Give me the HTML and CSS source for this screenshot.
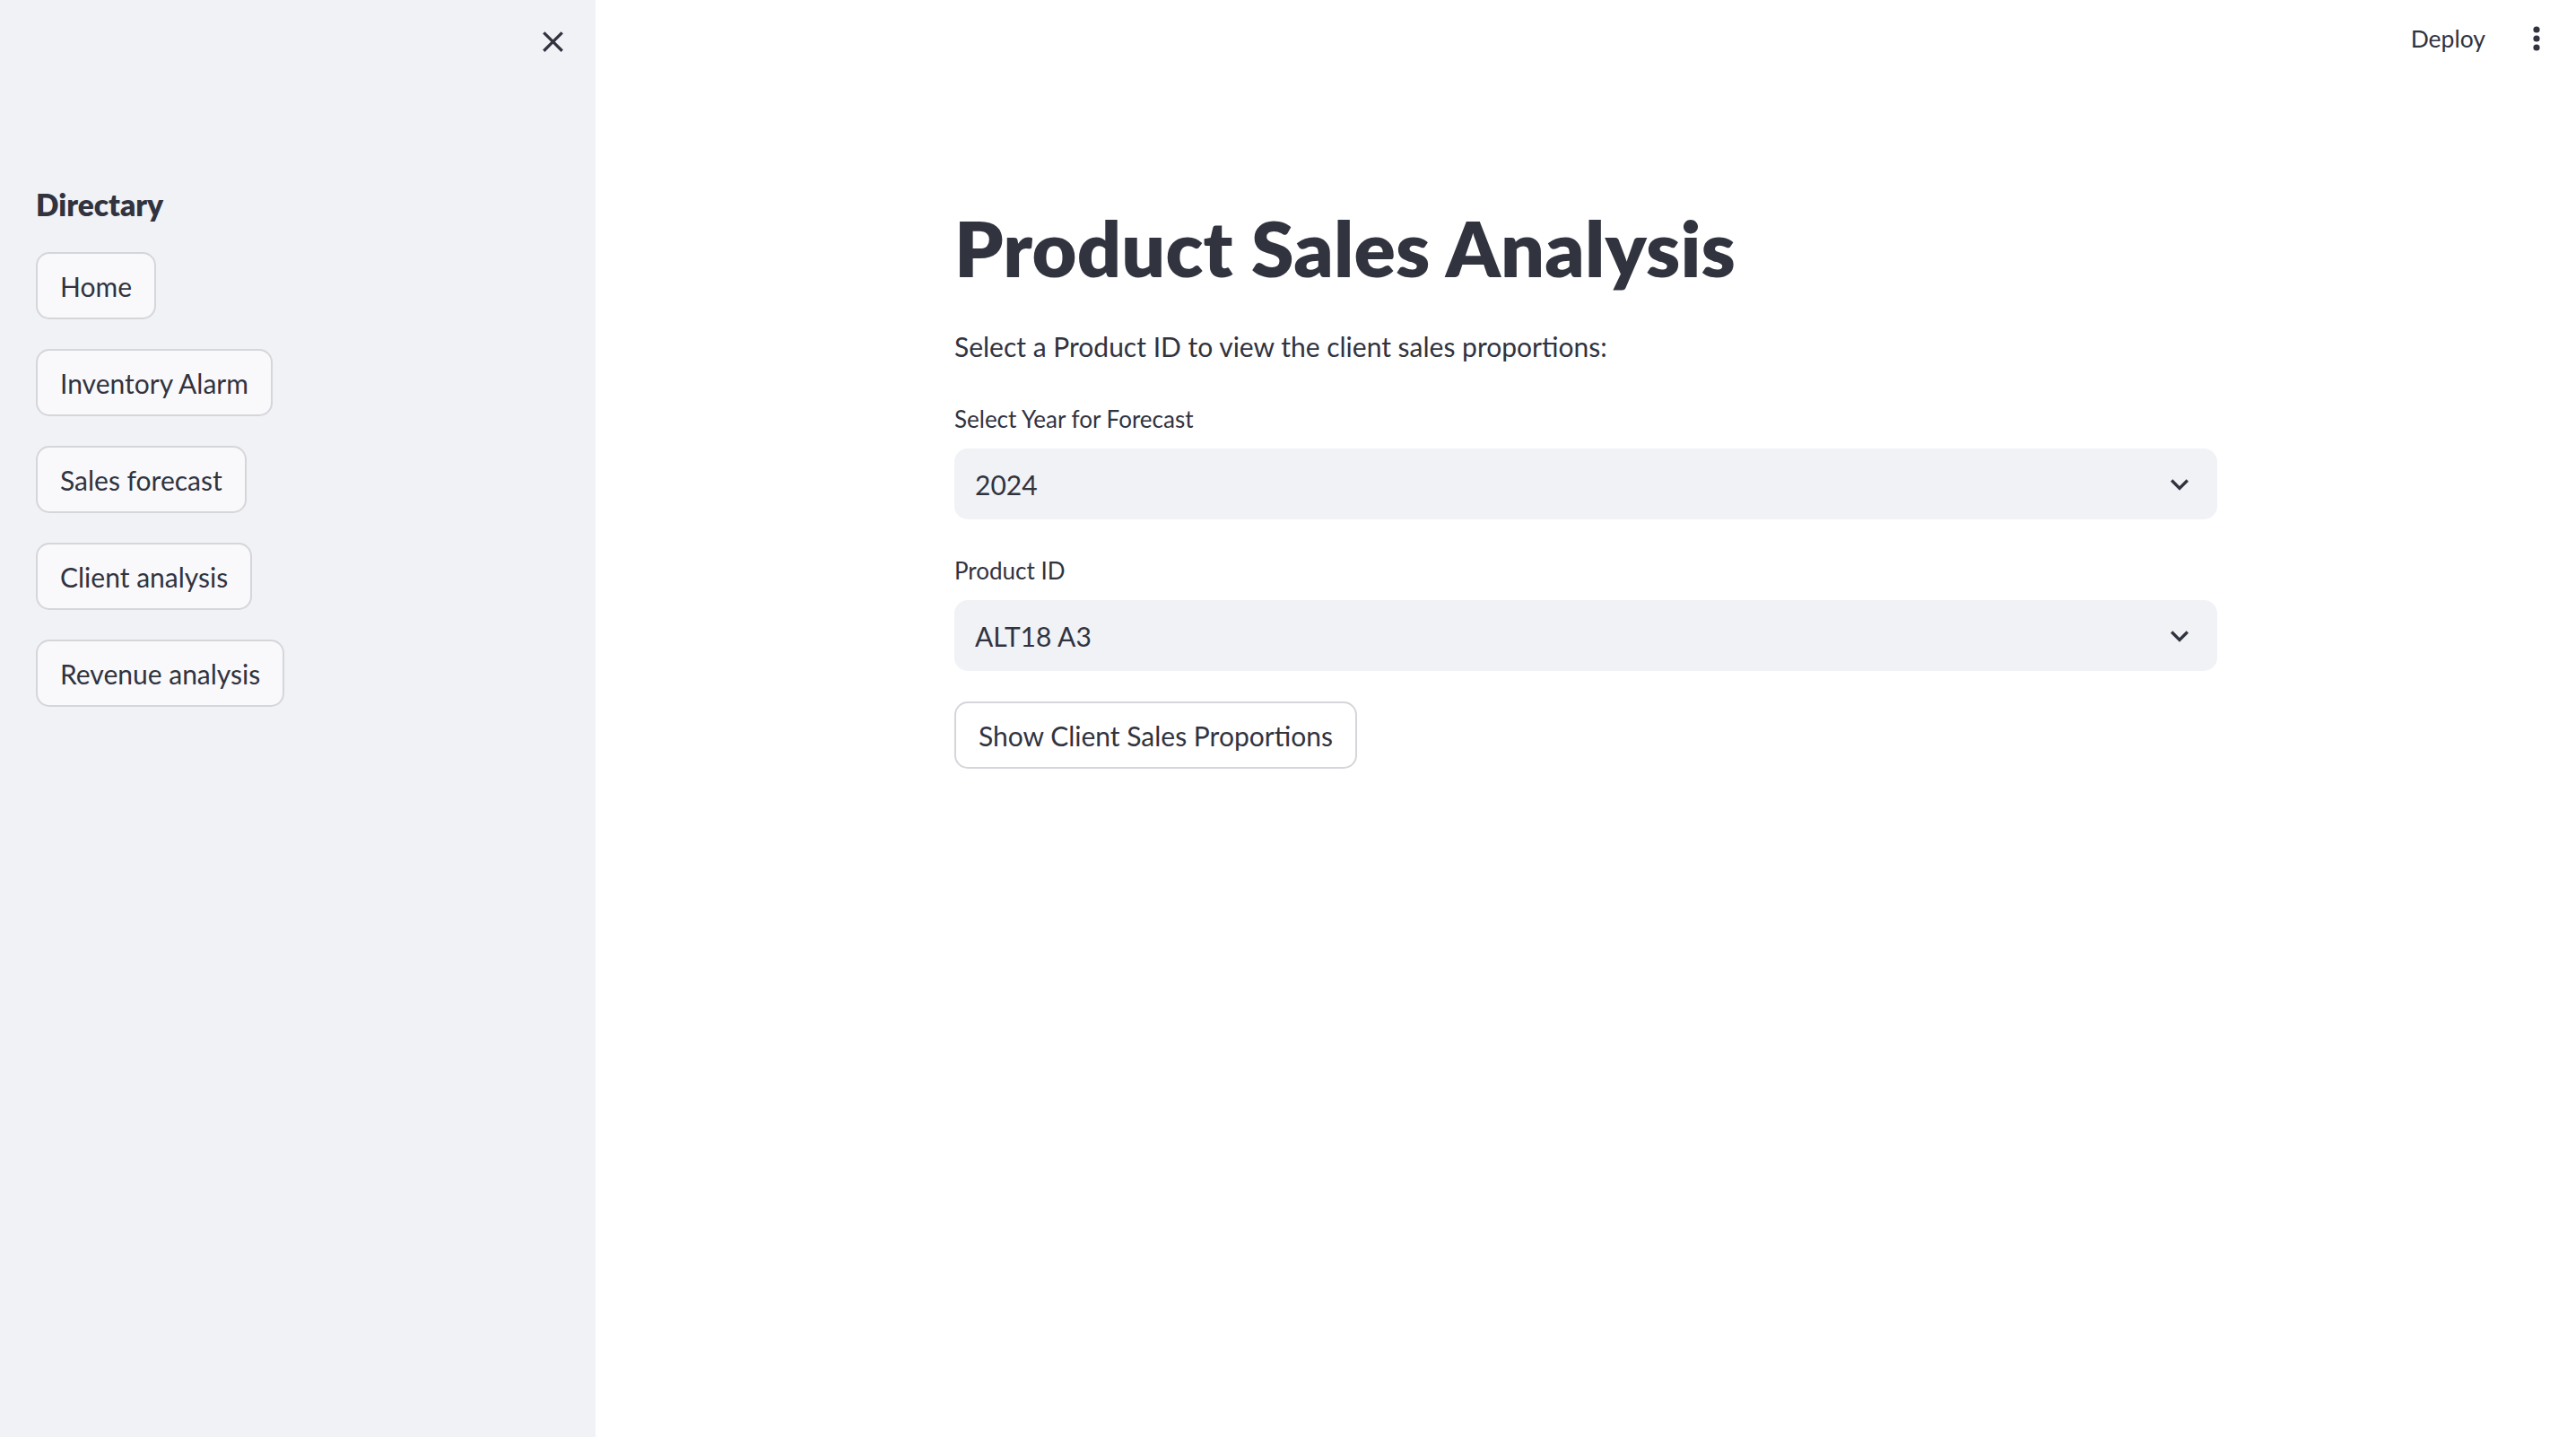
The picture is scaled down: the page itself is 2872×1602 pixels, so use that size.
FILE: index.html
```html
<!DOCTYPE html>
<html lang="en">
<head>
<meta charset="utf-8">
<title>Product Sales Analysis</title>
<link rel="stylesheet" href="styles.css">
</head>
<body>
<div class="app">
  <aside class="sidebar">
    <div class="sidebar-header">
      <svg class="close-icon" viewBox="0 0 24 24" width="39" height="39" aria-hidden="true"><path d="M19 6.41L17.59 5 12 10.59 6.41 5 5 6.41 10.59 12 5 17.59 6.41 19 12 13.41 17.59 19 19 17.59 13.41 12z"/></svg>
    </div>
    <div class="sidebar-content">
      <h3 class="side-title">Directary</h3>
      <nav class="side-nav">
        <button class="btn side-btn">Home</button>
        <button class="btn side-btn">Inventory Alarm</button>
        <button class="btn side-btn">Sales forecast</button>
        <button class="btn side-btn">Client analysis</button>
        <button class="btn side-btn">Revenue analysis</button>
      </nav>
    </div>
  </aside>
  <main class="main">
    <header class="toolbar">
      <span class="deploy">Deploy</span>
      <svg class="kebab" viewBox="0 0 10 30" width="10" height="30" aria-hidden="true"><circle cx="5" cy="5" r="3.6"/><circle cx="5" cy="15" r="3.6"/><circle cx="5" cy="25" r="3.6"/></svg>
    </header>
    <section class="content">
      <h1 class="title">Product Sales Analysis</h1>
      <p class="intro">Select a Product ID to view the client sales proportions:</p>
      <label class="field-label">Select Year for Forecast</label>
      <div class="select">
        <span>2024</span>
        <svg class="chevron" viewBox="0 0 24 24" width="40" height="40" aria-hidden="true"><path d="M16.59 8.59L12 13.17 7.41 8.59 6 10l6 6 6-6z"/></svg>
      </div>
      <label class="field-label second">Product ID</label>
      <div class="select">
        <span>ALT18 A3</span>
        <svg class="chevron" viewBox="0 0 24 24" width="40" height="40" aria-hidden="true"><path d="M16.59 8.59L12 13.17 7.41 8.59 6 10l6 6 6-6z"/></svg>
      </div>
      <div class="actions">
        <button class="btn main-btn">Show Client Sales Proportions</button>
      </div>
    </section>
  </main>
</div>
</body>
</html>
```

FILE: styles.css
```css
* { box-sizing: border-box; }
html, body { margin: 0; padding: 0; height: 100%; }
body {
  font-family: "Lato", "Noto Sans", sans-serif;
  color: #31333f;
  background: #ffffff;
  overflow: hidden;
}
.app {
  display: flex;
  height: 100vh;
}
.sidebar {
  width: 664px;
  flex: 0 0 664px;
  background: #f0f2f6;
  display: flex;
  flex-direction: column;
}
.sidebar-header {
  height: 92px;
  display: flex;
  justify-content: flex-end;
  align-items: center;
  padding-right: 28px;
}
.close-icon { fill: #31333f; }
.sidebar-content {
  padding: 116px 40px 0 40px;
  display: flex;
  flex-direction: column;
}
.side-title {
  margin: 0;
  font-size: 33.5px;
  line-height: 40px;
  font-weight: 800;
}
.side-nav {
  margin-top: 33px;
  display: flex;
  flex-direction: column;
  align-items: flex-start;
  gap: 33px;
}
.btn {
  font-family: inherit;
  color: #31333f;
  display: inline-flex;
  align-items: center;
  height: 75px;
  padding: 0 25px;
  border: 2px solid #d5d6da;
  border-radius: 15px;
  font-size: 30px;
  cursor: pointer;
}
.side-btn { background: #f9f9fb; }
.main {
  flex: 1;
  display: flex;
  flex-direction: column;
}
.toolbar {
  height: 86px;
  display: flex;
  justify-content: flex-end;
  align-items: center;
  gap: 52px;
  padding-right: 39px;
}
.deploy { font-size: 26.5px; }
.kebab { fill: #31333f; }
.content {
  width: 1408px;
  margin: 0 auto;
  padding-top: 138px;
  display: flex;
  flex-direction: column;
}
.title {
  margin: 0;
  font-size: 86px;
  line-height: 104px;
  font-weight: 800;
  letter-spacing: 0.2px;
}
.intro {
  margin: 39px 0 0 0;
  font-size: 30px;
  line-height: 38px;
}
.field-label {
  margin-top: 46px;
  font-size: 26px;
  line-height: 33px;
}
.field-label.second { margin-top: 41px; }
.select {
  margin-top: 16px;
  height: 79px;
  background: #f0f2f6;
  border-radius: 15px;
  display: flex;
  align-items: center;
  justify-content: space-between;
  padding: 0 22px 0 23px;
  font-size: 30px;
}
.chevron { fill: #31333f; }
.actions {
  margin-top: 34px;
  display: flex;
}
.main-btn { background: #ffffff; }
```
